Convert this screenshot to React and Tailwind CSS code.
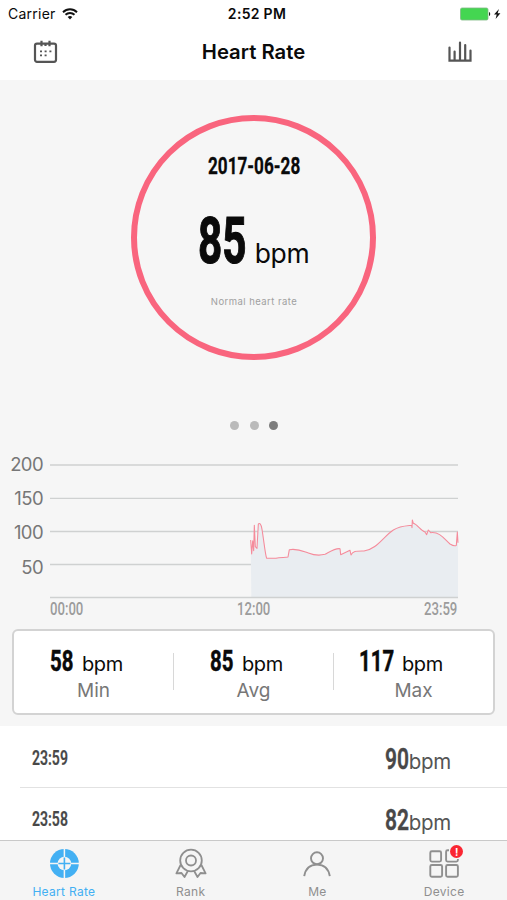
import React from "react";

const curve =
  "L32 120 L35 162 L38 122 L41 152 L43 76 L46 140 L51 145 L55 72 C58 68 63 70 66 88 C72 125 76 165 80 175 L108 175 C120 172 135 173 144 171 L148 149 C175 145 190 154 205 159 C225 167 240 167 255 163 C270 155 285 144 300 146 L302 164 L330 151 L333 165 C338 152 350 153 372 153 C410 148 430 110 460 90 C480 78 495 78 515 76 L516 83 L517 60 L520 70 C533 74 542 92 555 96 L560 104 L565 90 L572 98 C600 94 615 120 630 132 C640 138 645 139 649 136 L652 96 L654 128";

function Din({ box, text, children }) {
  return (
    <span className={`flex shrink-0 font-['Roboto',sans-serif] leading-none ${box}`}>
      <span className={`inline-block origin-left whitespace-nowrap ${text}`}>{children}</span>
    </span>
  );
}

function StatusBar() {
  return (
    <div className="flex h-[27px] items-center text-[14px] leading-none">
      <div className="flex flex-1 items-center gap-[6px] pl-[8px]">
        <span className="tracking-[0.25px]">Carrier</span>
        <svg width="16" height="12" viewBox="0 0 16 12" fill="none" stroke="#111" strokeWidth="1.9">
          <path d="M1 4.2C5 0.3 11 0.3 15 4.2" />
          <path d="M3.5 6.8C6 4.4 10 4.4 12.5 6.8" />
          <path d="M5.7 9L8 11.5L10.3 9C9 7.8 7 7.8 5.7 9Z" fill="#111" stroke="none" />
        </svg>
      </div>
      <span className="pl-[4px] text-[14px] font-semibold tracking-[0.3px]">2:52 PM</span>
      <div className="flex flex-1 items-center justify-end pr-[5px]">
        <svg width="42" height="14" viewBox="0 0 42 14">
          <rect x="0.5" y="1" width="27.5" height="12" rx="1.5" fill="#44d651" stroke="#7fb984" strokeWidth="0.8" />
          <path d="M29 5C30.6 5.4 30.6 8.6 29 9Z" fill="#222" />
          <path d="M39 2L34 7.6H36.7L35.6 12L40.4 6.2H37.6Z" fill="#111" />
        </svg>
      </div>
    </div>
  );
}

function NavBar() {
  return (
    <div className="flex h-[53px] items-center justify-between pr-[35px] pb-[3px] pl-[33px]">
      <svg width="25" height="24" viewBox="0 0 25 24" fill="none" stroke="#555" strokeWidth="2.2">
        <rect x="2" y="3.6" width="21" height="18.2" rx="2" />
        <path d="M8.5 0.8V6.2M16.5 0.8V6.2M12.5 3V6" />
        <path d="M7 11.4H9M11.6 11.4H13.6M16.4 11.4H18.4M7 15.4H9M11.6 15.4H13.6" strokeWidth="1.9" />
      </svg>
      <h1 className="pt-px pl-px text-[20.3px] leading-none font-semibold">Heart Rate</h1>
      <svg width="24" height="24" viewBox="0 0 24 24" fill="none" stroke="#555" strokeWidth="2.2" strokeLinecap="round">
        <path d="M1.5 7.5V20.6H22.5V10.5M6.6 11.5V20M12 2.5V20M17.2 5V20" />
      </svg>
    </div>
  );
}

function Ring() {
  return (
    <div className="mx-auto flex h-[245px] w-[245px] flex-col items-center rounded-full border-[6px] border-[#f9657e]">
      <Din box="mt-[33px] h-[25px] w-[92px]" text="text-[24.5px] font-bold scale-x-[0.7] [-webkit-text-stroke:0.3px]">2017-06-28</Din>
      <div className="mt-[31px] flex items-baseline">
        <Din box="w-[57px]" text="text-[64px] font-bold scale-x-[0.66] [-webkit-text-stroke:1.2px]">85</Din>
        <span className="text-[26.5px] leading-none font-normal tracking-[-0.4px]">bpm</span>
      </div>
      <span className="mt-[23px] pl-px text-[9.5px] leading-none tracking-[0.45px] text-[#a0a0a0]">Normal heart rate</span>
    </div>
  );
}

function Chart() {
  return (
    <div className="mt-[18px] h-[181px]">
      <div className="flex">
        <div className="-mt-px flex w-[43px] flex-col items-end text-[18.5px] leading-[34.2px] font-normal tracking-[-0.6px] text-[#777]">
          <span>200</span>
          <span>150</span>
          <span>100</span>
          <span>50</span>
        </div>
        <svg className="ml-[7px]" width="410" height="152" viewBox="50 448 410 152" fill="none">
          <path d="M50 465H458M50 498.4H458M50 531.5H458M50 564.5H458" stroke="#cfd1d1" strokeWidth="1.3" />
          <g transform="translate(240 500) scale(0.33333)">
            <path d={`M34 291 ${curve} L654 291 Z`} fill="#e9edf1" />
            <path d={`M32 120 ${curve}`} stroke="#f58b9b" strokeWidth="3.2" strokeLinejoin="round" />
          </g>
          <path d="M50 597.5H458" stroke="#cfd1d1" strokeWidth="1.3" />
        </svg>
      </div>
      <div className="flex justify-between pr-[49px] pl-[50px] text-[#9c9c9c]">
        <Din box="w-[34px]" text="text-[18px] font-medium scale-x-[0.73]">00:00</Din>
        <Din box="w-[34px]" text="text-[18px] font-medium scale-x-[0.73]">12:00</Din>
        <Din box="w-[34px]" text="text-[18px] font-medium scale-x-[0.73]">23:59</Din>
      </div>
    </div>
  );
}

function Stat({ value, box, label, pad }) {
  return (
    <div className="flex flex-1 flex-col">
      <div className={`flex items-baseline pt-[15px] ${pad}`}>
        <Din box={box} text="text-[30px] font-bold scale-x-[0.68] [-webkit-text-stroke:0.5px]">{value}</Din>
        <span className="text-[20px] leading-none tracking-[-0.4px]">bpm</span>
      </div>
      <span className="mt-[5px] text-center text-[19px] leading-none font-normal text-[#777]">{label}</span>
    </div>
  );
}

function Stats() {
  return (
    <div className="mr-[12px] ml-[12px] flex h-[86px] items-stretch rounded-[6px] border-2 border-[#d3d3d3] bg-white">
      <Stat value="58" box="w-[32px]" label="Min" pad="pl-[36px]" />
      <div className="mt-[22px] h-[37px] w-px bg-[#d8d8d8]" />
      <Stat value="85" box="w-[32px]" label="Avg" pad="pl-[36px]" />
      <div className="mt-[22px] h-[37px] w-px bg-[#d8d8d8]" />
      <Stat value="117" box="w-[43px]" label="Max" pad="pl-[25px]" />
    </div>
  );
}

function Row({ time, value, height }) {
  return (
    <div className={`flex items-center justify-between pt-[5px] pr-[56px] pl-[32px] text-[#484848] ${height}`}>
      <Din box="w-[37px]" text="text-[19.5px] font-semibold scale-x-[0.72] [-webkit-text-stroke:0.2px]">{time}</Din>
      <div className="flex items-baseline">
        <Din box="w-[24px]" text="text-[30px] font-semibold scale-x-[0.7] [-webkit-text-stroke:0.4px]">{value}</Din>
        <span className="text-[20.5px] leading-none font-normal tracking-[-0.3px] text-[#555]">bpm</span>
      </div>
    </div>
  );
}

function Tab({ label, active, children }) {
  return (
    <div className={`flex flex-col items-center pt-[7px] pl-px ${active ? "text-[#43b0f3]" : "text-[#8f8f8f]"}`}>
      <div className="relative h-[32px] w-[32px]">{children}</div>
      <span className="mt-[6px] text-[12px] leading-none tracking-[0.3px]">{label}</span>
    </div>
  );
}

function TabBar() {
  return (
    <div className="grid h-[60px] grid-cols-4 border-t border-[#c9c9c9] bg-[#f5f5f5]">
      <Tab label="Heart Rate" active>
        <svg width="32" height="32" viewBox="0 0 32 32">
          <circle cx="16.4" cy="15.5" r="14.4" fill="#43b0f3" />
          <circle cx="16.4" cy="15.5" r="6.8" fill="#f5f5f5" />
          <path d="M16.4 0.5V10M16.4 21V30.5M1.4 15.5H11M21 15.5H31.4" stroke="#f5f5f5" strokeWidth="1.5" />
          <path d="M16.4 9.5V21.5M10.4 15.5H22.4" stroke="#43b0f3" strokeWidth="1.6" />
        </svg>
      </Tab>
      <Tab label="Rank">
        <svg width="32" height="32" viewBox="0 0 32 32" fill="none" stroke="#8f8f8f" strokeWidth="1.8" strokeLinejoin="round">
          <circle cx="16" cy="12.5" r="10.8" />
          <circle cx="16" cy="12.5" r="5" />
          <path d="M5.6 17L1.4 25.4L6.5 25L9.5 29L13 22.8M26.4 17L30.6 25.4L25.5 25L22.5 29L19 22.8" />
        </svg>
      </Tab>
      <Tab label="Me">
        <svg width="32" height="32" viewBox="0 0 32 32" fill="none" stroke="#8f8f8f" strokeWidth="1.9">
          <circle cx="16" cy="10.3" r="6" />
          <path d="M3.2 28.2C4.5 20.5 9.5 16.6 16 16.6C22.5 16.6 27.5 20.5 28.8 28.2" />
        </svg>
      </Tab>
      <Tab label="Device">
        <svg width="32" height="32" viewBox="0 0 32 32" fill="none" stroke="#8f8f8f" strokeWidth="1.9">
          <rect x="2.3" y="3.3" width="10.8" height="10.3" rx="1.5" />
          <path d="M21 2.3H19.6Q18.1 2.3 18.1 3.8V12.1Q18.1 13.6 19.6 13.6H28.4Q29.9 13.6 29.9 12.1V11" />
          <rect x="2.3" y="17" width="11.8" height="11.8" rx="1.5" />
          <rect x="18.1" y="17" width="11.8" height="11.8" rx="1.5" />
        </svg>
        <span className="absolute top-[-3px] left-[22px] flex h-[13px] w-[13px] items-center justify-center rounded-full bg-[#fa2632] text-[10px] leading-none font-bold text-white">!</span>
      </Tab>
    </div>
  );
}

export default function App() {
  return (
    <div className="flex h-[900px] w-[507px] flex-col overflow-hidden bg-white font-['Inter',sans-serif] text-[#0a0a0a]">
      <StatusBar />
      <NavBar />
      <main className="h-[646px] shrink-0 bg-[#f6f6f6] pt-[35px]">
        <Ring />
        <div className="mt-[61px] flex justify-center gap-[10.5px] pl-px">
          <span className="h-[9px] w-[9px] rounded-full bg-[#bababa]" />
          <span className="h-[9px] w-[9px] rounded-full bg-[#bababa]" />
          <span className="h-[9px] w-[9px] rounded-full bg-[#7d7d7d]" />
        </div>
        <Chart />
        <Stats />
      </main>
      <div className="h-[114px] shrink-0 overflow-hidden">
        <Row time="23:59" value="90" height="h-[60px]" />
        <div className="mt-px ml-[20px] h-px bg-[#e2e2e2]" />
        <Row time="23:58" value="82" height="h-[59px]" />
      </div>
      <TabBar />
    </div>
  );
}
